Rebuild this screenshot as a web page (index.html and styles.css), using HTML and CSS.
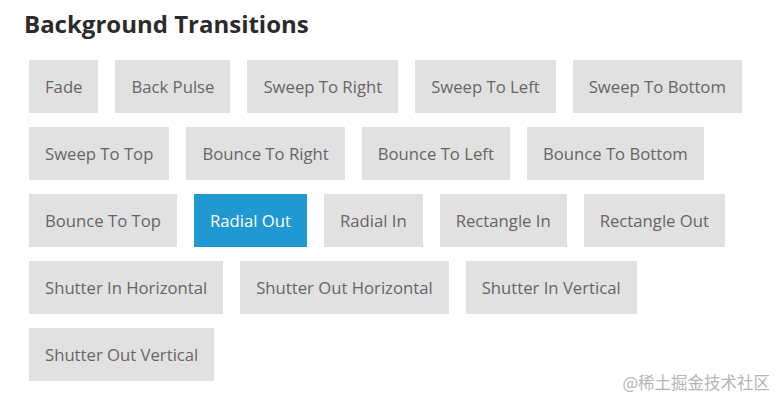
FILE: index.html
```html
<!DOCTYPE html>
<html lang="en">
<head>
<meta charset="utf-8">
<title>Background Transitions</title>
<link rel="stylesheet" href="styles.css">
</head>
<body>
<main class="page">
  <h2 class="title">Background Transitions</h2>
  <div class="buttons">
    <a class="btn">Fade</a>
    <a class="btn">Back Pulse</a>
    <a class="btn">Sweep To Right</a>
    <a class="btn">Sweep To Left</a>
    <a class="btn">Sweep To Bottom</a>
    <a class="btn">Sweep To Top</a>
    <a class="btn">Bounce To Right</a>
    <a class="btn">Bounce To Left</a>
    <a class="btn">Bounce To Bottom</a>
    <a class="btn">Bounce To Top</a>
    <a class="btn btn-active">Radial Out</a>
    <a class="btn">Radial In</a>
    <a class="btn">Rectangle In</a>
    <a class="btn">Rectangle Out</a>
    <a class="btn">Shutter In Horizontal</a>
    <a class="btn">Shutter Out Horizontal</a>
    <a class="btn">Shutter In Vertical</a>
    <a class="btn">Shutter Out Vertical</a>
  </div>
  <div class="watermark">@稀土掘金技术社区</div>
</main>
</body>
</html>
```

FILE: styles.css
```css
* { box-sizing: border-box; }
html, body {
  margin: 0;
  padding: 0;
  background: #ffffff;
}
.page {
  position: relative;
  width: 784px;
  height: 405px;
  padding: 8px 24px 0 24px;
  font-family: "Open Sans", "Noto Sans", sans-serif;
}
.title {
  margin: 0;
  font-size: 24px;
  line-height: 32px;
  font-weight: 700;
  color: #2b2b2b;
}
.buttons {
  display: flex;
  flex-wrap: wrap;
  column-gap: 17px;
  row-gap: 14px;
  margin-top: 20px;
  padding-left: 5px;
  width: 750px;
}
.btn {
  display: flex;
  align-items: center;
  height: 53px;
  padding: 0 16px;
  background: #e1e1e1;
  color: #666666;
  font-size: 16.7px;
  cursor: pointer;
}
.btn-active {
  background: #2098d1;
  color: #ffffff;
}
.watermark {
  position: absolute;
  right: 14px;
  bottom: 11px;
  font-family: "Noto Sans CJK SC", sans-serif;
  font-size: 16.5px;
  color: #b5b5b5;
}
```
